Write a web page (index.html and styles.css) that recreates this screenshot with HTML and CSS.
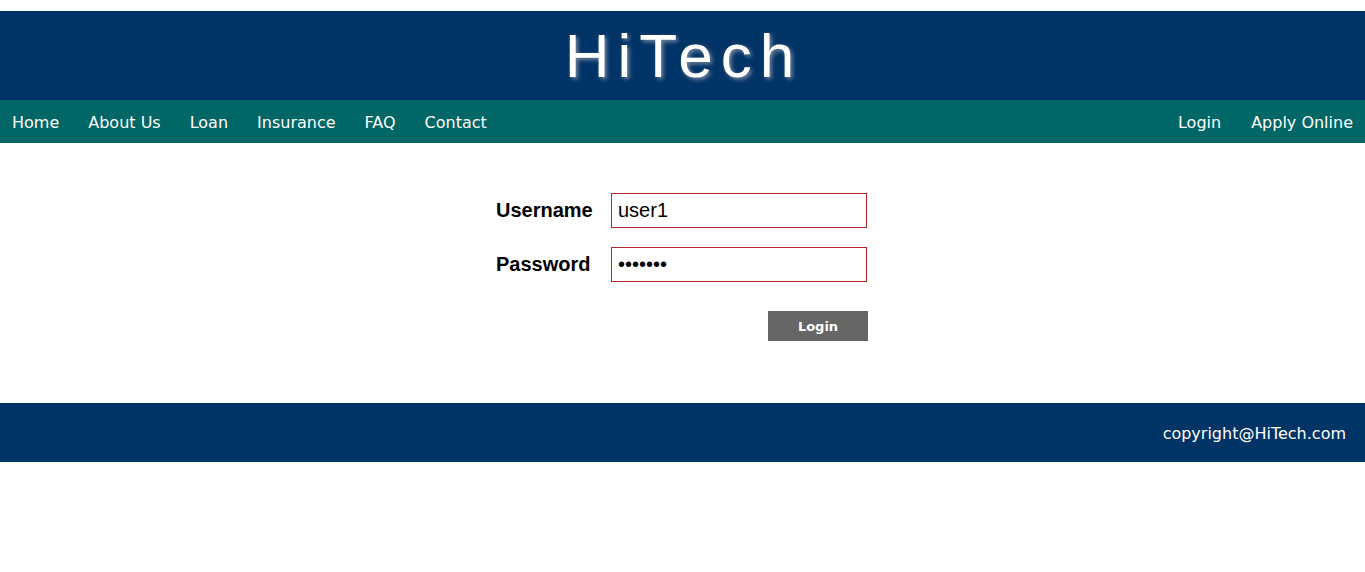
FILE: index.html
```html
<!DOCTYPE html>
<html lang="en">
<head>
<meta charset="utf-8">
<title>HiTech - Login</title>
<link rel="stylesheet" href="styles.css">
</head>
<body>
<div class="page">
  <header class="masthead">
    <h1 class="brand">HiTech</h1>
  </header>
  <nav class="menu">
    <ul class="menu-left">
      <li><a href="#">Home</a></li>
      <li><a href="#">About Us</a></li>
      <li><a href="#">Loan</a></li>
      <li><a href="#">Insurance</a></li>
      <li><a href="#">FAQ</a></li>
      <li><a href="#">Contact</a></li>
    </ul>
    <ul class="menu-right">
      <li><a href="#">Login</a></li>
      <li><a href="#">Apply Online</a></li>
    </ul>
  </nav>
  <main class="content">
    <form class="login-form">
      <label class="field-label" for="username">Username</label>
      <input class="field-input" id="username" type="text" value="user1">
      <label class="field-label" for="password">Password</label>
      <input class="field-input" id="password" type="password" value="1234567">
      <div class="actions">
        <button class="btn-login" type="button">Login</button>
      </div>
    </form>
  </main>
  <footer class="footer">
    <span class="copyright">copyright@HiTech.com</span>
  </footer>
</div>
</body>
</html>
```
FILE: styles.css
```css
html, body {
  margin: 0;
  padding: 0;
  background: #ffffff;
}

.page {
  padding-top: 11px;
}

.masthead {
  background: #003366;
  height: 89px;
  display: flex;
  align-items: center;
  justify-content: center;
}

.brand {
  margin: 0;
  font-family: "Liberation Sans", Arial, sans-serif;
  font-weight: normal;
  font-size: 62px;
  line-height: 62px;
  letter-spacing: 8px;
  padding-left: 2px;
  color: #ffffff;
  text-shadow: 2px 2px 4px #7a8aa0;
}

.menu {
  background: #006666;
  height: 43px;
  display: flex;
  justify-content: space-between;
  align-items: center;
  padding: 0 12px;
  font-family: "DejaVu Sans", Verdana, sans-serif;
  font-size: 16px;
}

.menu ul {
  list-style: none;
  margin: 0;
  padding: 0;
  display: flex;
  gap: 29px;
}

.menu-right {
  gap: 30px !important;
}

.menu a {
  color: #ffffff;
  text-decoration: none;
  line-height: 43px;
  padding-top: 2px;
  display: block;
}

.content {
  height: 260px;
  display: flex;
  justify-content: center;
  padding-top: 50px;
  box-sizing: border-box;
}

.login-form {
  display: grid;
  grid-template-columns: 115px 257px;
  grid-auto-rows: auto;
  row-gap: 19px;
  align-items: center;
  align-self: flex-start;
  padding-right: 1px;
}

.field-label {
  font-family: "Liberation Sans", Arial, sans-serif;
  font-weight: bold;
  font-size: 20px;
  color: #000000;
}

.field-input {
  box-sizing: border-box;
  width: 256px;
  height: 35px;
  border: 1px solid #b8262b;
  padding: 0 6px;
  margin: 0;
  font-family: "Liberation Sans", Arial, sans-serif;
  font-size: 20px;
  color: #000000;
  background: #ffffff;
  outline: none;
}

.actions {
  grid-column: 2;
  display: flex;
  justify-content: flex-end;
  margin-top: 10px;
}

.btn-login {
  width: 100px;
  height: 30px;
  border: none;
  background: #666666;
  color: #ffffff;
  font-family: "DejaVu Sans", Verdana, sans-serif;
  font-weight: bold;
  font-size: 13px;
  padding: 0;
  cursor: pointer;
}

.footer {
  background: #003366;
  height: 59px;
  display: flex;
  align-items: center;
  justify-content: flex-end;
  padding-right: 19px;
}

.copyright {
  color: #ffffff;
  font-family: "DejaVu Sans", Verdana, sans-serif;
  font-size: 16px;
  padding-top: 2px;
}
```
